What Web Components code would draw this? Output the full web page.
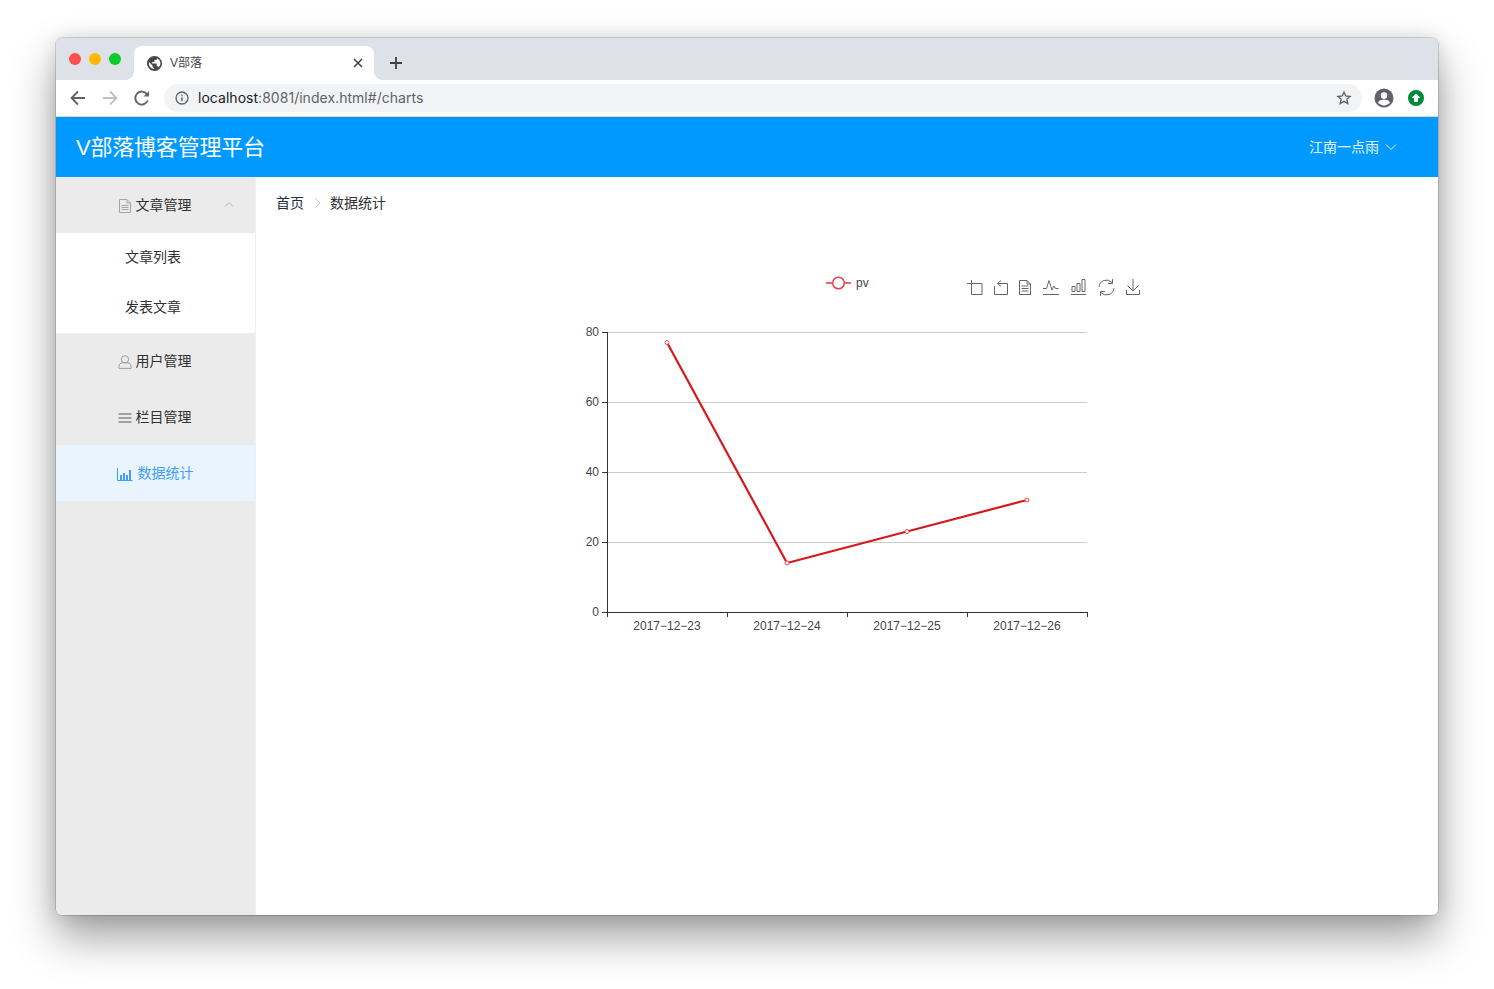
<!DOCTYPE html>
<html lang="zh">
<head>
<meta charset="utf-8">
<title>V部落</title>
<style>
  html, body { margin: 0; background: #fff; }
  body { padding: 38px 56px 74px; font-family: "Liberation Sans", "Noto Sans CJK SC", sans-serif; }
</style>
</head>
<body>
<browser-window>
  <blog-header></blog-header>
  <div style="display:flex;height:738px">
    <side-menu></side-menu>
    <charts-page></charts-page>
  </div>
</browser-window>

<script>
class BrowserWindow extends HTMLElement {
  constructor() {
    super();
    this.attachShadow({ mode: "open" });
    this.shadowRoot.innerHTML = `
      <style>
        :host {
          display: block;
          height: 877px;
          border-radius: 6px;
          overflow: hidden;
          background: #fff;
          box-shadow: 0 0 0 .5px rgba(0,0,0,.28), 0 22px 44px rgba(0,0,0,.38), 0 0 18px rgba(0,0,0,.12);
        }
        .tabs { height: 42px; background: #dee1e8; display: flex; position: relative; }
        .lights { display: flex; gap: 8px; padding: 15px 0 0 13px; width: 65px; box-sizing: border-box; }
        .lights i { width: 12px; height: 12px; border-radius: 50%; }
        .tab {
          width: 240px; height: 34px; margin-top: 8px; margin-left: 13px; position: relative;
          background: #fff; border-radius: 8px 8px 0 0;
          display: flex; align-items: center; padding: 0 10px 0 13px; box-sizing: border-box;
          font-size: 12px; color: #45474a;
        }
        .tab::before, .tab::after {
          content: ""; position: absolute; bottom: 0; width: 8px; height: 8px;
        }
        .tab::before { left: -8px; background: radial-gradient(circle at 0 0, transparent 7.5px, #fff 8px); }
        .tab::after { right: -8px; background: radial-gradient(circle at 100% 0, transparent 7.5px, #fff 8px); }
        .tab span { margin-left: 8px; flex: 1; padding-bottom: 3px; }
        .plus { margin: 17px 0 0 14px; width: 16px; height: 16px; }
        .bar { height: 36px; display: flex; align-items: center; border-bottom: 1px solid #d5d6d8; background: #fff; }
        .nav { display: flex; gap: 12px; padding-left: 12px; width: 108px; box-sizing: border-box; }
        .url {
          width: 1198px; height: 28px; border-radius: 14px; background: #f1f3f4;
          display: flex; align-items: center; padding: 0 10px 0 11px; box-sizing: border-box;
          font: 14px Inter, "Liberation Sans", sans-serif; color: #5f6368;
        }
        .url b { font-weight: 400; color: #202124; }
        .url span { margin-left: 9px; flex: 1; letter-spacing: .03px; padding-bottom: 2px; }
        .acct { margin-left: 12px; }
        .upd { margin-left: 14px; }
      </style>
      <div class="tabs">
        <div class="lights">
          <i style="background:#ff4f4a"></i><i style="background:#ffba00"></i><i style="background:#0ccb2d"></i>
        </div>
        <div class="tab">
          <svg width="15" height="15" viewBox="0 0 24 24"><path fill="#45474a" d="M12 0a12 12 0 1 0 0 24 12 12 0 0 0 0-24zM3 12c0-.8.1-1.500.3-2.300L9 15.500v1.200c0 1.300 1 2.300 2.300 2.300v2A9 9 0 0 1 3 12zm15.800 6c-.3-.9-1.100-1.500-2.100-1.500h-1.100v-3.400c0-.6-.5-1.100-1.100-1.100H8.400v-2.300h2.300c.6 0 1.100-.5 1.100-1.100V6.300h2.300c1.300 0 2.300-1 2.300-2.300v-.5A9 9 0 0 1 18.800 18z"/></svg>
          <span>V部落</span>
          <svg width="12" height="12" viewBox="0 0 12 12"><path d="M2 2l8 8M10 2l-8 8" stroke="#3c4043" stroke-width="1.500"/></svg>
        </div>
        <svg class="plus" viewBox="0 0 16 16"><path d="M8 2v12M2 8h12" stroke="#3c4043" stroke-width="1.800"/></svg>
      </div>
      <div class="bar">
        <div class="nav">
          <svg width="20" height="20" viewBox="0 0 20 20"><path d="M17 10H4M10 3.500L3.500 10l6.500 6.500" fill="none" stroke="#5f6368" stroke-width="1.800"/></svg>
          <svg width="20" height="20" viewBox="0 0 20 20"><path d="M3 10h13M10 3.500l6.500 6.500-6.500 6.500" fill="none" stroke="#bdc1c6" stroke-width="1.800"/></svg>
          <svg width="20" height="20" viewBox="0 0 20 20"><path d="M15.800 12.500a6.500 6.500 0 1 1-.8-6.300" fill="none" stroke="#5f6368" stroke-width="1.900"/><path d="M17 3v5.500h-5.500z" fill="#5f6368"/></svg>
        </div>
        <div class="url">
          <svg width="14" height="14" viewBox="0 0 14 14"><circle cx="7" cy="7" r="6" fill="none" stroke="#5f6368" stroke-width="1.300"/><path d="M7 6.200v4M7 3.800v1.400" stroke="#5f6368" stroke-width="1.400"/></svg>
          <span><b>localhost</b>:8081/index.html#/charts</span>
          <svg width="16" height="16" viewBox="0 0 24 24"><path d="M12 3l2.700 6 6.500.7-4.900 4.300 1.400 6.400L12 17l-5.700 3.400 1.400-6.400-4.900-4.300 6.500-.7z" fill="none" stroke="#5f6368" stroke-width="2"/></svg>
        </div>
        <svg class="acct" width="20" height="20" viewBox="0 0 20 20"><circle cx="10" cy="10" r="9.500" fill="#5f6368"/><circle cx="10" cy="7.500" r="3.200" fill="#fff"/><path d="M4 14.500c1.200-2 3.700-2.900 6-2.900s4.800.9 6 2.900c-1.400 1.800-3.600 2.900-6 2.900s-4.600-1.100-6-2.900z" fill="#fff"/></svg>
        <svg class="upd" width="16" height="16" viewBox="0 0 16 16"><circle cx="8" cy="8" r="8" fill="#00893a"/><path d="M8 3.500L12.500 8H10v4H6V8H3.500z" fill="#fff"/></svg>
      </div>
      <slot></slot>
    `;
  }
}

class BlogHeader extends HTMLElement {
  constructor() {
    super();
    this.attachShadow({ mode: "open" });
    this.shadowRoot.innerHTML = `
      <style>
        :host {
          display: flex; align-items: center; justify-content: space-between;
          height: 60px; background: #0099ff; color: #fff; padding: 0 41px 0 20px;
          font-family: "Liberation Sans", "Noto Sans CJK SC", sans-serif;
        }
        .title { font-size: 22px; padding-bottom: 4px; letter-spacing: -.2px; }
        .user { font-size: 14px; display: flex; align-items: center; gap: 6px; opacity: .92; padding-bottom: 2px; }
        .user svg { margin-top: 2px; }
      </style>
      <div class="title">V部落博客管理平台</div>
      <div class="user">江南一点雨
        <svg width="12" height="12" viewBox="0 0 12 12"><path d="M1 3.500l5 5 5-5" fill="none" stroke="#fff" stroke-width="1"/></svg>
      </div>
    `;
  }
}

class MenuItem extends HTMLElement {
  constructor() {
    super();
    this.attachShadow({ mode: "open" });
    this.shadowRoot.innerHTML = `
      <style>
        :host {
          display: flex; align-items: center; justify-content: center;
          height: 56px; font-size: 14px; color: #303133; position: relative;
          background: #ebebeb; padding: 0 2px 2px 0; box-sizing: border-box;
          gap: 4px;
        }
        :host([sub]) { height: 50px; background: #fff; padding: 0 5px 4px 0; }
        :host([active]) { background: #e9f4ff; color: #3f9eff; gap: 5px; padding-right: 1px; }
        .arrow { position: absolute; right: 21px; top: 23px; }
        ::slotted(svg) { display: block; margin-top: 4px; }
      </style>
      <slot></slot>
    `;
  }
  connectedCallback() {
    if (this.hasAttribute("open")) {
      const a = document.createElementNS("http://www.w3.org/2000/svg", "svg");
      a.setAttribute("class", "arrow");
      a.setAttribute("width", "10");
      a.setAttribute("height", "10");
      a.setAttribute("viewBox", "0 0 10 10");
      a.innerHTML = '<path d="M1 6.500l4-4 4 4" fill="none" stroke="#a9adb3" stroke-width=".9"/>';
      this.shadowRoot.appendChild(a);
    }
  }
}

class SideMenu extends HTMLElement {
  constructor() {
    super();
    this.attachShadow({ mode: "open" });
    this.shadowRoot.innerHTML = `
      <style>
        :host { display: block; width: 200px; box-sizing: border-box; background: #ebebeb; border-right: 1px solid #f0f0f0; flex: none; }
      </style>
      <menu-item open>
        <svg width="14" height="14" viewBox="0 0 14 14"><path d="M1.500.5h7.500l3.500 3.500v9.500h-11zM9 .5V4h3.500M3.500 6.500h7M3.500 8.500h7M3.500 10.500h7" fill="none" stroke="#9a9ea4" stroke-width=".9"/></svg>
        文章管理
      </menu-item>
      <menu-item sub>文章列表</menu-item>
      <menu-item sub>发表文章</menu-item>
      <menu-item>
        <svg width="14" height="14" viewBox="0 0 14 14"><circle cx="7" cy="4.300" r="3.600" fill="none" stroke="#9a9ea4"/><path d="M1 13.400V11c0-1.700 1.800-3.200 3-3.200h6c1.200 0 3 1.500 3 3.200v2.400z" fill="none" stroke="#9a9ea4"/></svg>
        用户管理
      </menu-item>
      <menu-item>
        <svg width="14" height="14" viewBox="0 0 14 14"><path d="M.5 3h13M.5 7h13M.5 11h13" stroke="#85898f" stroke-width="1.300"/></svg>
        栏目管理
      </menu-item>
      <menu-item active>
        <svg width="16" height="14" viewBox="0 0 16 14"><path d="M.5 1v12.500h15" fill="none" stroke="#3f9eff"/><path d="M3 8h2v5H3zM6 6h2v7H6zM9 8h2v5H9zM12 3h2v10h-2z" fill="#3f9eff"/></svg>
        数据统计
      </menu-item>
    `;
  }
}

class LineChart extends HTMLElement {
  constructor() {
    super();
    this.attachShadow({ mode: "open" });
    const labels = ["2017-12-23", "2017-12-24", "2017-12-25", "2017-12-26"];
    const values = [77, 14, 23, 32];
    const y = v => 340 - v * 3.5;
    let grid = "", ticks = "", texts = "";
    for (const v of [0, 20, 40, 60, 80]) {
      if (v) grid += `<path d="M60 ${y(v) + .5}H540" stroke="#ccc"/>`;
      ticks += `<path d="M55 ${y(v) + .5}H60" stroke="#333"/>`;
      texts += `<text x="52" y="${y(v) + 3.500}" text-anchor="end">${v}</text>`;
    }
    for (let i = 0; i <= 4; i++) ticks += `<path d="M${60.5 + i * 120} 340V345" stroke="#333"/>`;
    labels.forEach((l, i) => {
      texts += `<text x="${120 + i * 120}" y="358" text-anchor="middle">${l.replace(/-/g, "\u2212")}</text>`;
    });
    const pts = values.map((v, i) => [120 + i * 120, y(v)]);
    const dots = pts.map(p => `<circle cx="${p[0]}" cy="${p[1]}" r="2" fill="#fff" stroke="#e34a4f"/>`).join("");
    this.shadowRoot.innerHTML = `
      <style>
        :host { display: block; width: 600px; height: 400px; }
        svg { display: block; font: 12px "Liberation Sans", sans-serif; fill: #444; }
        .tool { fill: none; stroke: #666; stroke-width: 1; }
      </style>
      <svg width="600" height="400" viewBox="0 0 600 400">
        ${grid}
        <path d="M60.500 60V340.500H540" fill="none" stroke="#333"/>
        ${ticks}
        ${texts}
        <polyline points="${pts.map(p => p.join(",")).join(" ")}" fill="none" stroke="#d7191c" stroke-width="2.200"/>
        ${dots}
        <path d="M279 11H304" stroke="#e5575c" stroke-width="1.800"/>
        <circle cx="291.500" cy="11" r="5.800" fill="#fff" stroke="#e0434a" stroke-width="1.500"/>
        <text x="309" y="15">pv</text>
        <g class="tool" transform="translate(420 8)">
          <path d="M0 3.500H15V14.500H4.500V0" />
        </g>
        <g class="tool" transform="translate(447 8)">
          <path d="M7 .5L3.500 3.500 7 6.500M3.500 3.500H13.500V14.500H.5V6" />
        </g>
        <g class="tool" transform="translate(472 8)">
          <path d="M.5 .5H8L11.500 4V14.500H.5zM8 .5V4H11.500M2.500 6H9.500M2.500 8.500H9.500M2.500 11H9.500" />
        </g>
        <g class="tool" transform="translate(496 7)">
          <path d="M0 9.500H3.500L6 1.500 9 11 11 7 12.500 9.500H15.500M0 15.500H16" />
        </g>
        <g class="tool" transform="translate(524 7)">
          <path d="M1 7.500H4V12.500H1zM6 4.500H9V12.500H6zM11 .5H14V12.500H11zM0 15.500H15" />
        </g>
        <g class="tool" transform="translate(551 7)">
          <path d="M1 8A7.500 7.500 0 0 1 14 3.500M16 9A7.500 7.500 0 0 1 3 13.500M14.500 0V4.500H10M2.500 17V12.500H7" />
        </g>
        <g class="tool" transform="translate(579 7)">
          <path d="M7 0V12M1.500 6.500L7 12 12.500 6.500M.5 11V15.500H13.500V11" />
        </g>
      </svg>
    `;
  }
}

class ChartsPage extends HTMLElement {
  constructor() {
    super();
    this.attachShadow({ mode: "open" });
    this.shadowRoot.innerHTML = `
      <style>
        :host { display: block; flex: 1; background: #fff; padding: 17px 20px 0; box-sizing: border-box; }
        .crumb { display: flex; align-items: center; font-size: 14px; height: 18px; color: #303133; line-height: 18px; }
        .crumb b { font-weight: 400; color: #1f2d3d; }
        .crumb svg { margin: 0 7px 0 9px; }
        line-chart { margin: 60px auto 0; }
      </style>
      <div class="crumb">
        <b>首页</b>
        <svg width="10" height="12" viewBox="0 0 10 12"><path d="M2 1l5 5-5 5" fill="none" stroke="#c9cdd2"/></svg>
        <span>数据统计</span>
      </div>
      <line-chart></line-chart>
    `;
  }
}

customElements.define("browser-window", BrowserWindow);
customElements.define("blog-header", BlogHeader);
customElements.define("menu-item", MenuItem);
customElements.define("side-menu", SideMenu);
customElements.define("line-chart", LineChart);
customElements.define("charts-page", ChartsPage);
</script>
</body>
</html>
